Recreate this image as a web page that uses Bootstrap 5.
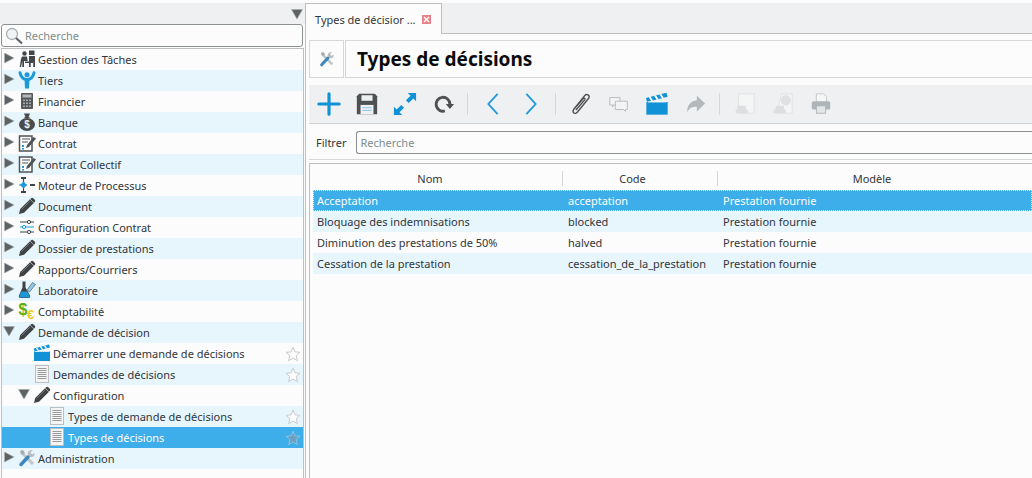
<!DOCTYPE html>
<html lang="fr">
<head>
<meta charset="UTF-8">
<meta name="viewport" content="width=device-width, initial-scale=1.0">
<title>Types de décisions</title>
<link href="https://cdn.jsdelivr.net/npm/bootstrap@5.3.0/dist/css/bootstrap.min.css" rel="stylesheet">
<style>
html, body { height: 478px; overflow: hidden; }
body { background: #fcfcfc; font-family: "Noto Sans", sans-serif; font-size: 11px; color: #31363b; padding-top: 3px; line-height: 21px; }
.app-shell { height: 475px; width: 1032px; }
.side-pane { width: 305px; flex: none; }
.side-top { height: 21px; background: #eff0f1; padding-right: 2px; }
.search-box { height: 23px; margin: 0 2px 1px 1px; border: 1px solid #8b9093; border-radius: 3px; background: #fcfcfc; color: #7f8c8d; padding-left: 3px; gap: 2px; }
.tree-box { margin-left: 1px; margin-right: 1px; border: 1px solid #bcbebf; border-bottom: 0; flex: 1; }
.tree-row { height: 21px; align-items: center; white-space: nowrap; }
.tree-row:nth-child(even) { background: #e7f5fd; }
.tree-row.is-current { background: #3daee9; color: #fcfcfc; }
.arrow { width: 12px; height: 12px; flex: none; margin-left: 1px; margin-top: -3px; }
.tico { width: 18px; height: 18px; flex: none; margin-left: 3px; margin-right: 2px; margin-top: -1px; }
.lvl1 { padding-left: 28px; }
.lvl1-node { padding-left: 15px; }
.lvl2 { padding-left: 43px; }
.star-ico { width: 16px; height: 16px; margin-left: auto; margin-right: 2px; flex: none; }
.main-pane { border-left: 1px solid #bcbebf; min-width: 0; flex: 1; }
.tab-strip { height: 31px; background: #eff0f1; border-bottom: 1px solid #bcbebf; }
.doc-tab { width: 136px; height: 31px; border-right: 1px solid #bcbebf; border-top: 1px solid #bcbebf; background: #fcfcfc; padding-left: 9px; align-items: center; gap: 6px; white-space: nowrap; }
.title-row { margin: 6px 0 0 3px; height: 38px; gap: 1px; }
.title-ico { width: 35px; border: 1px solid #d5d7d8; }
.title-txt { flex: 1; border: 1px solid #d5d7d8; border-right: 0; padding-left: 11px; font-size: 19px; font-weight: 700; color: #0b0b0b; line-height: 36px; }
.tool-row { margin: 7px 0 0 3px; height: 39px; background: #eff0f1; border-bottom: 1px solid #d0d2d3; padding-left: 1px; align-items: center; }
.tool-ico { width: 24px; height: 24px; flex: none; }
.tool-cell { width: 38px; display: flex; justify-content: center; flex: none; }
.tool-sep { width: 1px; height: 22px; background: #d5d7d8; margin: 0 6px 0 5px; flex: none; }
.filter-row { margin: 6px 0 0 10px; height: 24px; align-items: center; gap: 10px; color: #31363b; }
.filter-input { flex: 1; height: 23px; border: 1px solid #8b9093; border-right: 0; border-radius: 3px 0 0 3px; padding-left: 3px; color: #7f8c8d; line-height: 21px; background: #fcfcfc; }
.rule-line { margin: 5px 0 0 3px; height: 1px; background: #d5d7d8; }
.grid-box { margin: 3px 0 0 3px; border: 1px solid #bcbebf; border-right: 0; border-bottom: 0; padding: 2px 0 0 3px; flex: 1; }
.grid-head { height: 24px; align-items: center; text-align: center; }
.grid-head > div { height: 15px; line-height: 15px; border-right: 1px solid #d5d7d8; padding-right: 15px; }
.grid-head > div:last-child { border-right: 0; padding-right: 6px; }
.c-nom { width: 250px; flex: none; }
.c-code { width: 155px; flex: none; }
.c-mod { flex: 1; }
.grid-row { height: 21px; align-items: center; white-space: nowrap; }
.grid-row > div { padding-left: 5px; }
.grid-row > div:first-child { padding-left: 4px; }
.grid-row:nth-child(even) { background: #e7f5fd; }
.grid-row.is-current { background: #3daee9; color: #fcfcfc; outline: 1px dotted #d8eefb; outline-offset: -1px; }
</style>
</head>
<body>
<svg width="0" height="0" class="position-absolute">
  <defs>
    <symbol id="i-right" viewBox="0 0 12 12"><path d="M1.500 1 11 6l-9.500 5z" fill="#5d6265" stroke="#a9abac" stroke-width=".6"/></symbol>
    <symbol id="i-down" viewBox="0 0 12 12"><path d="M.5 1.500h11L6 11z" fill="#5d6265" stroke="#a9abac" stroke-width=".6"/></symbol>
    <symbol id="i-pencil" viewBox="0 0 18 18"><path d="M1 17l1.200-5L12 2.200 15.800 6 6 15.800z" fill="#3f4345"/><path d="M13 1.200c.8-.7 1.600-.7 2.200 0l1.600 1.600c.6.600.6 1.400 0 2L16 5.700 12.300 2z" fill="#3f4345"/><path d="M3.500 12.500 12 4" stroke="#8a8d8f" stroke-width=".7"/></symbol>
    <symbol id="i-people" viewBox="0 0 18 18"><circle cx="6.500" cy="3.500" r="2.200" fill="#41464a"/><path d="M4 6.500h5l.7 4.500H6v6H4.300V11L3 17H1.700L3 9z" fill="#41464a"/><path d="M11 .5h5.500v4.500H11z" fill="#41464a"/><path d="M11 6h6v11h-1.800v-5h-2.500v5H11zM7 11.500h8V13H7z" fill="#41464a"/></symbol>
    <symbol id="i-tiers" viewBox="0 0 18 18"><circle cx="9" cy="3.800" r="2.500" fill="#1d99d8"/><path d="M2 1.800c.8 4 3 6.700 7 6.700s6.200-2.700 7-6.700" fill="none" stroke="#1d99d8" stroke-width="3" stroke-linecap="round"/><path d="M6.500 8h5L11 17.500H7z" fill="#1d99d8"/></symbol>
    <symbol id="i-calc" viewBox="0 0 18 18"><rect x="3" y="1" width="12" height="16" rx="1" fill="#55595c"/><rect x="4.500" y="2.500" width="9" height="3" fill="#b5b8ba"/><path d="M5 7.500h2v1.500H5zM8 7.500h2v1.500H8zM11 7.500h2v1.500h-2zM5 10.500h2v1.500H5zM8 10.500h2v1.500H8zM11 10.500h2v1.500h-2zM5 13.500h2V15H5zM8 13.500h2V15H8zM11 13.500h2V15h-2z" fill="#a5a8aa"/></symbol>
    <symbol id="i-bag" viewBox="0 0 18 18"><path d="M6 .5h6L10.500 4h-3z" fill="#4a4c4c"/><ellipse cx="9" cy="11.500" rx="8" ry="6.500" fill="#4a4c4c"/><path d="M6.500 4.500h5" stroke="#4a4c4c" stroke-width="1.400"/><text x="9" y="15" font-size="10" font-weight="700" text-anchor="middle" fill="#f2f2f2" font-family="Liberation Sans, sans-serif">$</text></symbol>
    <symbol id="i-contract" viewBox="0 0 18 18"><path d="M1.500 2h12.500v15H1.500z" fill="#fff" stroke="#4e5356" stroke-width="1.500"/><path d="M4 5h8M4 8h6" stroke="#4e5356" stroke-width="1.200"/><path d="M4 11h2v2H4zM4 14h2v1.500H4z" fill="#1d99d8"/><path d="M8 14l1-3 6.500-8L18 4.500 11 13z" fill="#4e5356"/></symbol>
    <symbol id="i-proc" viewBox="0 0 18 18"><path d="M3 1h5v2H3zM3 15h5v2H3z" fill="#41464a"/><path d="M5.500 3v12" stroke="#41464a" stroke-width="1.200"/><path d="M5.500 5.500 9 9l-3.500 3.500L2 9z" fill="#1d99d8"/><path d="M1 8.500h8v1H1z" fill="#1d99d8"/><path d="M12 8h5v2h-5z" fill="#41464a"/></symbol>
    <symbol id="i-sliders" viewBox="0 0 18 18"><path d="M2 4h14" stroke="#41464a"/><path d="M2 9h14" stroke="#1d99d8"/><path d="M2 14h14" stroke="#41464a"/><circle cx="11" cy="4" r="1.600" fill="#fff" stroke="#41464a"/><circle cx="6" cy="9" r="1.600" fill="#fff" stroke="#1d99d8"/><circle cx="11" cy="14" r="1.600" fill="#fff" stroke="#41464a"/></symbol>
    <symbol id="i-lab" viewBox="0 0 18 18"><path d="M4.500 .5h3v6l4.500 8c.5 1.500 0 2.500-1.500 2.500h-8C1 17 .5 16 1 14.500l3.500-8z" fill="#3d4245"/><path d="M3 10.500h6l3 5-1 1H2l-.7-1z" fill="#1d99d8"/><path d="M9 9l5.500-7.500 3 2L11.500 11z" fill="#8fc7e8" stroke="#5d6265" stroke-width=".7"/></symbol>
    <symbol id="i-compta" viewBox="0 0 18 18"><text x="5" y="13" font-size="16" font-weight="700" text-anchor="middle" fill="#5cab13" font-family="Liberation Sans, sans-serif">$</text><text x="12.500" y="16.500" font-size="13" font-weight="700" text-anchor="middle" fill="#edc921" font-family="Liberation Sans, sans-serif">€</text></symbol>
    <symbol id="i-clap" viewBox="0 0 18 18"><path d="M1 7.500h16V17H1z" fill="#1192d6"/><path d="M.7 4.500 16 .5l1 3L1.500 7.500z" fill="#1192d6"/><path d="M3.500 3.800 5.500 6.800M7.500 2.700l2 3M11.500 1.700l2 3" stroke="#fff" stroke-width="1.400"/><path d="M2 7.500h14" stroke="#fff" stroke-width=".6"/></symbol>
    <symbol id="i-list" viewBox="0 0 18 18"><rect x="2.500" y=".5" width="13" height="17" fill="#f4f4f4" stroke="#bcbebf"/><path d="M4.500 3.500h9M4.500 5.500h9M4.500 7.500h9M4.500 9.500h9M4.500 11.500h9M4.500 13.500h9" stroke="#8d9092" stroke-width=".9"/></symbol>
    <symbol id="i-tools" viewBox="0 0 18 18"><path d="M3 3l12 12" stroke="#c3c6c8" stroke-width="3"/><path d="M2 2l3-1 2 3-3 2z" fill="#a8abad"/><path d="M10 6c-1-2.500.5-5 4.500-5l-2 2.500 1.500 2L16.500 4c.5 3.500-2.500 5-5 3.500z" fill="#b9bcbe"/><path d="M3 15.500 10 8" stroke="#3f86bb" stroke-width="3.400" stroke-linecap="round"/></symbol>
    <symbol id="i-star" viewBox="0 0 16 16"><path d="M8 1.200l2 4.700 5 .4-3.800 3.300 1.200 5L8 12 3.600 14.600l1.200-5L1 6.300l5-.4z" fill="#fcfcfc" stroke="#c9cbcc"/></symbol>
    <symbol id="i-star-on" viewBox="0 0 16 16"><path d="M8 1.200l2 4.700 5 .4-3.800 3.300 1.200 5L8 12 3.600 14.600l1.200-5L1 6.300l5-.4z" fill="#6d9fc0" stroke="#86c3e6"/></symbol>
    <symbol id="i-search" viewBox="0 0 18 18"><circle cx="7" cy="7" r="5.500" fill="#eef3f5" stroke="#a9adaf" stroke-width="1.300"/><path d="M11 11l6 5.500" stroke="#5d6265" stroke-width="2.200"/></symbol>
  </defs>
</svg>

<div class="app-shell d-flex">
  <!-- arbre -->
  <div class="side-pane d-flex flex-column">
    <div class="side-top d-flex justify-content-end align-items-center">
      <svg width="12" height="12"><use href="#i-down"/></svg>
    </div>
    <div class="search-box d-flex align-items-center">
      <svg width="18" height="18"><use href="#i-search"/></svg>
      <span>Recherche</span>
    </div>
    <div class="tree-box">
      <div class="tree-row d-flex"><svg class="arrow"><use href="#i-right"/></svg><svg class="tico"><use href="#i-people"/></svg>Gestion des Tâches</div>
      <div class="tree-row d-flex"><svg class="arrow"><use href="#i-right"/></svg><svg class="tico"><use href="#i-tiers"/></svg>Tiers</div>
      <div class="tree-row d-flex"><svg class="arrow"><use href="#i-right"/></svg><svg class="tico"><use href="#i-calc"/></svg>Financier</div>
      <div class="tree-row d-flex"><svg class="arrow"><use href="#i-right"/></svg><svg class="tico"><use href="#i-bag"/></svg>Banque</div>
      <div class="tree-row d-flex"><svg class="arrow"><use href="#i-right"/></svg><svg class="tico"><use href="#i-contract"/></svg>Contrat</div>
      <div class="tree-row d-flex"><svg class="arrow"><use href="#i-right"/></svg><svg class="tico"><use href="#i-contract"/></svg>Contrat Collectif</div>
      <div class="tree-row d-flex"><svg class="arrow"><use href="#i-right"/></svg><svg class="tico"><use href="#i-proc"/></svg>Moteur de Processus</div>
      <div class="tree-row d-flex"><svg class="arrow"><use href="#i-right"/></svg><svg class="tico"><use href="#i-pencil"/></svg>Document</div>
      <div class="tree-row d-flex"><svg class="arrow"><use href="#i-right"/></svg><svg class="tico"><use href="#i-sliders"/></svg>Configuration Contrat</div>
      <div class="tree-row d-flex"><svg class="arrow"><use href="#i-right"/></svg><svg class="tico"><use href="#i-pencil"/></svg>Dossier de prestations</div>
      <div class="tree-row d-flex"><svg class="arrow"><use href="#i-right"/></svg><svg class="tico"><use href="#i-pencil"/></svg>Rapports/Courriers</div>
      <div class="tree-row d-flex"><svg class="arrow"><use href="#i-right"/></svg><svg class="tico"><use href="#i-lab"/></svg>Laboratoire</div>
      <div class="tree-row d-flex"><svg class="arrow"><use href="#i-right"/></svg><svg class="tico"><use href="#i-compta"/></svg>Comptabilité</div>
      <div class="tree-row d-flex"><svg class="arrow"><use href="#i-down"/></svg><svg class="tico"><use href="#i-pencil"/></svg>Demande de décision</div>
      <div class="tree-row d-flex lvl1"><svg class="tico"><use href="#i-clap"/></svg>Démarrer une demande de décisions<svg class="star-ico"><use href="#i-star"/></svg></div>
      <div class="tree-row d-flex lvl1"><svg class="tico"><use href="#i-list"/></svg>Demandes de décisions<svg class="star-ico"><use href="#i-star"/></svg></div>
      <div class="tree-row d-flex lvl1-node"><svg class="arrow"><use href="#i-down"/></svg><svg class="tico"><use href="#i-pencil"/></svg>Configuration</div>
      <div class="tree-row d-flex lvl2"><svg class="tico"><use href="#i-list"/></svg>Types de demande de décisions<svg class="star-ico"><use href="#i-star"/></svg></div>
      <div class="tree-row d-flex lvl2 is-current"><svg class="tico"><use href="#i-list"/></svg>Types de décisions<svg class="star-ico"><use href="#i-star-on"/></svg></div>
      <div class="tree-row d-flex"><svg class="arrow"><use href="#i-right"/></svg><svg class="tico"><use href="#i-tools"/></svg>Administration</div>
    </div>
  </div>

  <!-- contenu -->
  <div class="main-pane d-flex flex-column">
    <div class="tab-strip">
      <div class="doc-tab d-flex">
        <span>Types de décisior ...</span>
        <svg width="9" height="9" viewBox="0 0 9 9"><rect width="9" height="9" fill="#e8808a"/><path d="M2 2l5 5M7 2 2 7" stroke="#fff" stroke-width="1.400"/></svg>
      </div>
    </div>
    <div class="title-row d-flex">
      <div class="title-ico d-flex align-items-center justify-content-center"><svg width="16" height="16"><use href="#i-tools"/></svg></div>
      <div class="title-txt">Types de décisions</div>
    </div>
    <div class="tool-row d-flex">
      <div class="tool-cell"><svg class="tool-ico" viewBox="0 0 26 26"><path d="M2 13h22M13 2v22" stroke="#1192d6" stroke-width="3.400" stroke-linecap="round"/></svg></div>
      <div class="tool-cell"><svg class="tool-ico" viewBox="0 0 26 26"><path d="M2 4.500 4.500 2h17L24 4.500V24H2z" fill="#4e5152"/><rect x="7" y="3.500" width="12" height="6" fill="#eff0f1"/><rect x="6" y="14" width="14" height="10" fill="#eff0f1"/><path d="M8 17h10M8 20h10" stroke="#7fc1e8"/></svg></div>
      <div class="tool-cell"><svg class="tool-ico" viewBox="0 0 26 26"><path d="M16 1h9v9l-3-3-5 5-3-3 5-5zM1 16l3 3 5-5 3 3-5 5 3 3H1z" fill="#1192d6"/></svg></div>
      <div class="tool-cell"><svg class="tool-ico" viewBox="0 0 26 26"><path d="M20.500 13A7.500 7.500 0 1 0 15 20.500" fill="none" stroke="#4e5152" stroke-width="3.200"/><path d="M16 13h9l-4.500 5.500z" fill="#4e5152"/></svg></div>
      <div class="tool-sep"></div>
      <div class="tool-cell"><svg class="tool-ico" viewBox="0 0 26 26"><path d="M18 2 8 13l10 11" fill="none" stroke="#1d99d8" stroke-width="2"/></svg></div>
      <div class="tool-cell"><svg class="tool-ico" viewBox="0 0 26 26"><path d="M8 2l10 11L8 24" fill="none" stroke="#1d99d8" stroke-width="2"/></svg></div>
      <div class="tool-sep"></div>
      <div class="tool-cell"><svg class="tool-ico" viewBox="0 0 26 26"><path d="M5 19 17 4c2-2.500 6-.5 4.500 2.500L9 22c-2.500 2.500-6 .5-4-3L15.500 7c1-1 2.500 0 1.500 1.500L7.500 19.500" fill="none" stroke="#4e5152" stroke-width="1.500"/></svg></div>
      <div class="tool-cell"><svg class="tool-ico" viewBox="0 0 26 26"><path d="M3 6h11v8H7l-1 2v-2H3z" fill="#f4f4f4" stroke="#b5b8ba"/><path d="M9 10h13v9h-2v2l-2-2H9z" fill="#f4f4f4" stroke="#b5b8ba"/></svg></div>
      <div class="tool-cell"><svg class="tool-ico" viewBox="0 0 26 26"><use href="#i-clap"/></svg></div>
      <div class="tool-cell"><svg class="tool-ico" viewBox="0 0 26 26"><path d="M15 4l9 8.500L15 21v-5c-5 0-8 1-10.500 6 0-7 3-12 10.500-13z" fill="#b5b8ba"/></svg></div>
      <div class="tool-sep"></div>
      <div class="tool-cell"><svg class="tool-ico" viewBox="0 0 26 26"><path d="M6 2h17v21H6z" fill="#f4f5f5" stroke="#dfe1e2"/><path d="M3 19h13v4H3zM5 15h9v4H5z" fill="#dcdedf"/></svg></div>
      <div class="tool-cell"><svg class="tool-ico" viewBox="0 0 26 26"><path d="M11 2h12v21H7z" fill="#f4f5f5" stroke="#dfe1e2"/><circle cx="16" cy="9" r="5.500" fill="#dfe1e2"/><path d="M3 19h13v4H3zM5 15h9v4H5z" fill="#dcdedf"/></svg></div>
      <div class="tool-cell"><svg class="tool-ico" viewBox="0 0 26 26"><path d="M8 2h8l3 3v6H8z" fill="#f6f6f6" stroke="#c5c7c8"/><rect x="3" y="10" width="20" height="9" rx="2" fill="#aeb5b9"/><rect x="8" y="15" width="10" height="8" fill="#e4e5e6" stroke="#aeb5b9"/></svg></div>
    </div>
    <div class="filter-row d-flex">
      <span>Filtrer</span>
      <div class="filter-input">Recherche</div>
    </div>
    <div class="rule-line"></div>
    <div class="grid-box">
      <div class="grid-head d-flex">
        <div class="c-nom">Nom</div>
        <div class="c-code">Code</div>
        <div class="c-mod">Modèle</div>
      </div>
      <div>
        <div class="grid-row d-flex is-current"><div class="c-nom">Acceptation</div><div class="c-code">acceptation</div><div class="c-mod">Prestation fournie</div></div>
        <div class="grid-row d-flex"><div class="c-nom">Bloquage des indemnisations</div><div class="c-code">blocked</div><div class="c-mod">Prestation fournie</div></div>
        <div class="grid-row d-flex"><div class="c-nom">Diminution des prestations de 50%</div><div class="c-code">halved</div><div class="c-mod">Prestation fournie</div></div>
        <div class="grid-row d-flex"><div class="c-nom">Cessation de la prestation</div><div class="c-code">cessation_de_la_prestation</div><div class="c-mod">Prestation fournie</div></div>
      </div>
    </div>
  </div>
</div>

<script src="https://cdn.jsdelivr.net/npm/bootstrap@5.3.0/dist/js/bootstrap.bundle.min.js"></script>
</body>
</html>
